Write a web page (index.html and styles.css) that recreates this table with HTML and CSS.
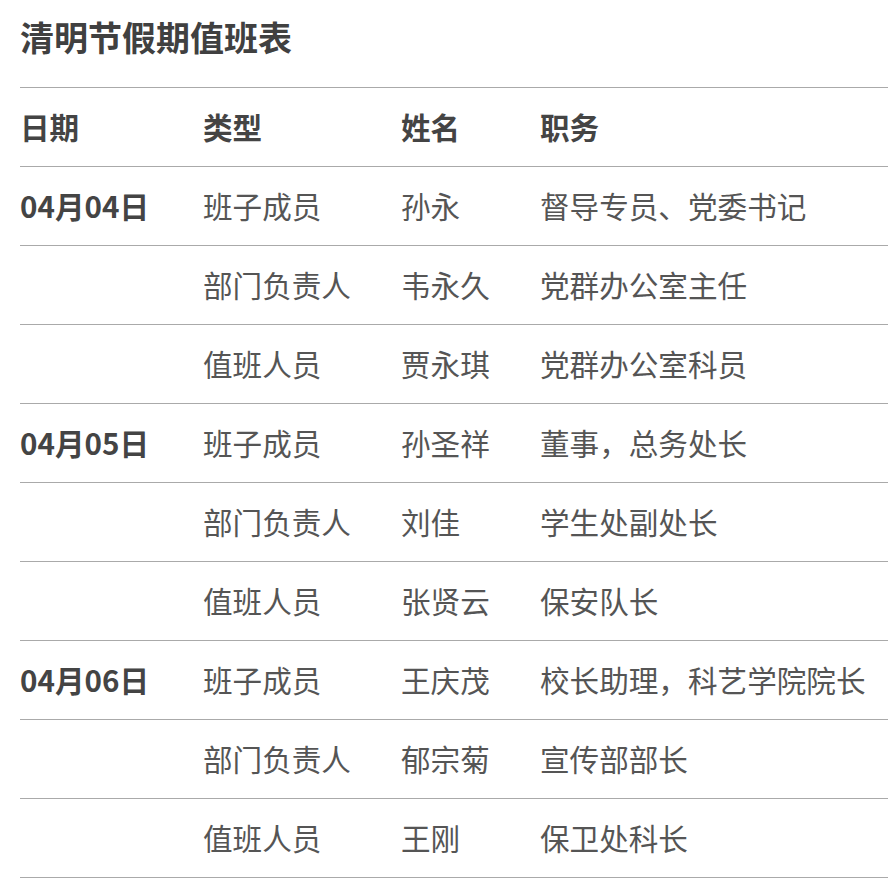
FILE: index.html
```html
<!DOCTYPE html>
<html lang="zh-CN">
<head>
<meta charset="utf-8">
<title>清明节假期值班表</title>
<link rel="stylesheet" href="styles.css">
</head>
<body>
<h1 class="title">清明节假期值班表</h1>
<div class="duty">
  <div class="cell head">日期</div><div class="cell head">类型</div><div class="cell head">姓名</div><div class="cell head">职务</div>

  <div class="cell date">04月04日</div><div class="cell">班子成员</div><div class="cell">孙永</div><div class="cell">督导专员、党委书记</div>
  <div class="cell date"></div><div class="cell">部门负责人</div><div class="cell">韦永久</div><div class="cell">党群办公室主任</div>
  <div class="cell date"></div><div class="cell">值班人员</div><div class="cell">贾永琪</div><div class="cell">党群办公室科员</div>

  <div class="cell date">04月05日</div><div class="cell">班子成员</div><div class="cell">孙圣祥</div><div class="cell">董事，总务处长</div>
  <div class="cell date"></div><div class="cell">部门负责人</div><div class="cell">刘佳</div><div class="cell">学生处副处长</div>
  <div class="cell date"></div><div class="cell">值班人员</div><div class="cell">张贤云</div><div class="cell">保安队长</div>

  <div class="cell date">04月06日</div><div class="cell">班子成员</div><div class="cell">王庆茂</div><div class="cell">校长助理，科艺学院院长</div>
  <div class="cell date"></div><div class="cell">部门负责人</div><div class="cell">郁宗菊</div><div class="cell">宣传部部长</div>
  <div class="cell date"></div><div class="cell">值班人员</div><div class="cell">王刚</div><div class="cell">保卫处科长</div>
</div>
</body>
</html>
```

FILE: styles.css
```css
html, body {
  margin: 0;
  padding: 0;
  background: #fff;
}
body {
  padding-left: 20px;
  font-family: "Microsoft YaHei", "Noto Sans CJK SC", "Noto Sans", sans-serif;
  color: #555;
}
.title {
  margin: 20px 0 33px 0;
  font-size: 34px;
  line-height: 34px;
  font-weight: 700;
  color: #404040;
}
.duty {
  display: grid;
  grid-template-columns: 183px 198px 139px 1fr;
  border-top: 1px solid #aaa;
}
.cell {
  box-sizing: border-box;
  height: 79px;
  border-bottom: 1px solid #aaa;
  display: flex;
  align-items: center;
  font-size: 29.6px;
  line-height: 1;
  white-space: nowrap;
  color: #555;
}
.head, .date {
  font-weight: 700;
  color: #444;
}
```
